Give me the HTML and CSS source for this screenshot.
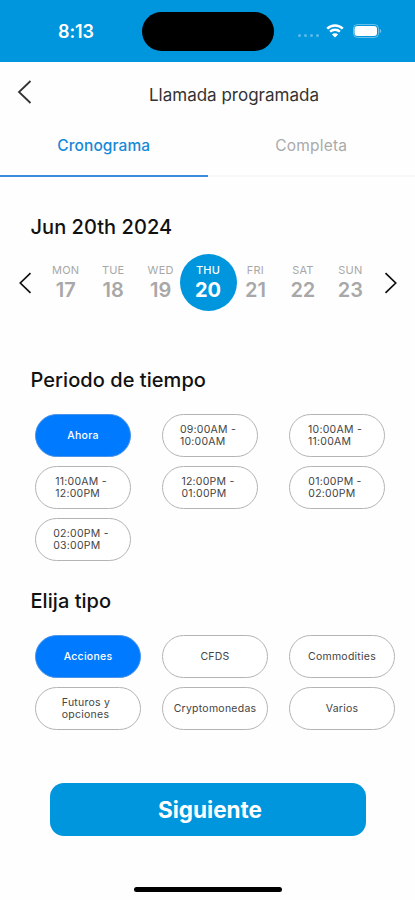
FILE: index.html
```
<!DOCTYPE html>
<html lang="es">
<head>
    <meta charset="UTF-8">
    <meta name="viewport" content="width=device-width, initial-scale=1.0">
    <title>Llamada programada</title>
    <link rel="stylesheet" href="styles.css">
</head>
<body>
    <div class="status-bar">
        <span class="time">8:13</span>
        <div class="island"></div>
        <div class="status-icons">
            <div class="dots"><i></i><i></i><i></i><i></i></div>
            <svg class="wifi" width="18" height="14" viewBox="0 0 18 14">
                <path d="M1.2 4.7a11.2 11.2 0 0 1 15.6 0M4.1 7.7a7 7 0 0 1 9.8 0" fill="none" stroke="#fff" stroke-width="2.4"/>
                <path d="M9 13.6L5.9 10.5a4.4 4.4 0 0 1 6.2 0z" fill="#fff"/>
            </svg>
            <svg class="battery" width="29" height="15" viewBox="0 0 29 15">
                <rect x="0.5" y="0.5" width="25" height="13" rx="4" fill="none" stroke="#fff" stroke-opacity="0.4"/>
                <rect x="1.5" y="2" width="22.5" height="10" rx="3" fill="#fff"/>
                <path d="M26.8 5v4.2a2.3 2.3 0 0 0 0-4.2z" fill="#fff" fill-opacity="0.5"/>
            </svg>
        </div>
    </div>

    <div class="header">
        <svg class="back" width="16" height="26" viewBox="0 0 16 26">
            <path d="M13.5 2L2 13L13.5 24" fill="none" stroke="#333" stroke-width="1.8"/>
        </svg>
        <h1>Llamada programada</h1>
    </div>

    <div class="tabs">
        <div class="tab active">Cronograma</div>
        <div class="tab">Completa</div>
    </div>

    <div class="content">
        <h2 class="month">Jun 20th 2024</h2>
        <div class="week">
            <svg class="arrow" width="14" height="22" viewBox="0 0 14 22">
                <path d="M12.5 1.2L2.3 11L12.5 20.8" fill="none" stroke="#111" stroke-width="1.7"/>
            </svg>
            <div class="days">
                <div class="day"><span>MON</span><b>17</b></div>
                <div class="day"><span>TUE</span><b>18</b></div>
                <div class="day"><span>WED</span><b>19</b></div>
                <div class="day selected"><span>THU</span><b>20</b></div>
                <div class="day"><span>FRI</span><b>21</b></div>
                <div class="day"><span>SAT</span><b>22</b></div>
                <div class="day"><span>SUN</span><b>23</b></div>
            </div>
            <svg class="arrow" width="14" height="22" viewBox="0 0 14 22">
                <path d="M1.5 1.2L11.7 11L1.5 20.8" fill="none" stroke="#111" stroke-width="1.7"/>
            </svg>
        </div>

        <h2 class="period">Periodo de tiempo</h2>
        <div class="chips times">
            <div class="chip on"><span>Ahora</span></div>
            <div class="chip two"><span>09:00AM -<br>10:00AM</span></div>
            <div class="chip two"><span>10:00AM -<br>11:00AM</span></div>
            <div class="chip two"><span>11:00AM -<br>12:00PM</span></div>
            <div class="chip two"><span>12:00PM -<br>01:00PM</span></div>
            <div class="chip two"><span>01:00PM -<br>02:00PM</span></div>
            <div class="chip two"><span>02:00PM -<br>03:00PM</span></div>
        </div>

        <h2 class="type">Elija tipo</h2>
        <div class="chips types">
            <div class="chip on"><span>Acciones</span></div>
            <div class="chip"><span>CFDS</span></div>
            <div class="chip"><span>Commodities</span></div>
            <div class="chip two"><span>Futuros y<br>opciones</span></div>
            <div class="chip"><span>Cryptomonedas</span></div>
            <div class="chip"><span>Varios</span></div>
        </div>
    </div>

    <button class="next">Siguiente</button>
    <div class="home-bar"></div>
</body>
</html>
```
FILE: styles.css
```
* {
    box-sizing: border-box;
}
body {
    margin: 0;
    height: 900px;
    overflow: hidden;
    background-color: #fefefe;
    font-family: Inter, sans-serif;
    color: #111;
    display: flex;
    flex-direction: column;
}
.status-bar {
    height: 62px;
    flex: none;
    background-color: #0096dd;
    display: grid;
    grid-template-columns: 142px 132px 1fr;
    align-items: center;
}
.time {
    padding-left: 10px;
    text-align: center;
    color: #fff;
    font-size: 18px;
    font-weight: 600;
    letter-spacing: -0.1px;
}
.island {
    height: 39px;
    margin-top: 1px;
    border-radius: 20px;
    background-color: #000;
}
.status-icons {
    display: flex;
    align-items: center;
    padding-left: 24px;
}
.dots {
    display: flex;
    gap: 3px;
    margin-top: 9px;
}
.dots i {
    width: 3px;
    height: 3px;
    border-radius: 50%;
    background-color: #5cbbea;
}
.wifi {
    margin-left: 7px;
}
.battery {
    margin-left: 9px;
}
.header {
    height: 60px;
    flex: none;
    display: flex;
    align-items: center;
    padding: 0 96px 0 17px;
}
.back {
    margin-top: -1px;
}
.header h1 {
    flex: 1;
    margin: 5px 0 0 116px;
    font-size: 17px;
    font-weight: 400;
    color: #333;
    white-space: nowrap;
}
.tabs {
    height: 55px;
    flex: none;
    display: flex;
}
.tab {
    flex: 1;
    padding-top: 13px;
    border-bottom: 2px solid #f8f8f8;
    text-align: center;
    font-size: 15.5px;
    line-height: 21px;
    letter-spacing: 0.2px;
    color: #aaa;
}
.tab.active {
    color: #1689d6;
    border-color: #3a8bdb;
    font-weight: 500;
    letter-spacing: 0.1px;
}
.content h2 {
    margin: 0 0 0 30.5px;
    font-size: 20px;
    line-height: 24px;
    font-weight: 500;
    color: #111;
    letter-spacing: 0.05px;
}
.content .month {
    margin-top: 38px;
}
.week {
    display: flex;
    align-items: center;
    justify-content: space-between;
    height: 57px;
    margin-top: 15px;
    padding: 0 17px 0 18px;
}
.days {
    display: flex;
    width: 332px;
}
.day {
    flex: 1;
    height: 57px;
    padding-top: 9px;
    display: flex;
    flex-direction: column;
    align-items: center;
    color: #a8a8a8;
}
.day span {
    font-size: 11px;
    line-height: 15px;
    letter-spacing: 0.2px;
}
.day b {
    font-size: 20px;
    line-height: 24px;
    font-weight: 600;
}
.day.selected {
    flex: none;
    width: 57px;
    margin: 0 -4.8px;
    border-radius: 50%;
    background-color: #0096dd;
    color: #fff;
}
.selected span {
    font-weight: 500;
}
.selected b {
    font-weight: 700;
}
.content .period {
    margin-top: 57px;
}
.chips {
    display: grid;
    grid-template-columns: repeat(3, 127px);
    row-gap: 9px;
    padding-left: 35px;
}
.times {
    margin-top: 22px;
}
.types {
    margin-top: 22px;
}
.chip {
    width: 96px;
    height: 43px;
    display: flex;
    align-items: center;
    justify-content: center;
    border: 1px solid #b4b4b4;
    border-radius: 22px;
    background-color: #fff;
    font-size: 10.5px;
    line-height: 12.5px;
    letter-spacing: 0.25px;
    color: #444;
}
.types .chip {
    width: 106px;
}
.chip.two {
    padding-right: 4px;
}
.chip.on {
    background-color: #007aff;
    border-color: #4a93e6;
    color: #fff;
    font-weight: 500;
}
.chip span {
    padding-top: 1px;
}
.content .type {
    margin-top: 28px;
}
.next {
    width: 316px;
    height: 53px;
    flex: none;
    margin: 53px 0 0 50px;
    padding: 0 0 1px 4px;
    border: 0;
    border-radius: 14px;
    background-color: #0096dd;
    color: #fff;
    font-family: inherit;
    font-size: 22.5px;
    font-weight: 700;
}
.home-bar {
    width: 148px;
    height: 5px;
    flex: none;
    margin: 51px 0 0 134px;
    border-radius: 3px;
    background-color: #000;
}
```
